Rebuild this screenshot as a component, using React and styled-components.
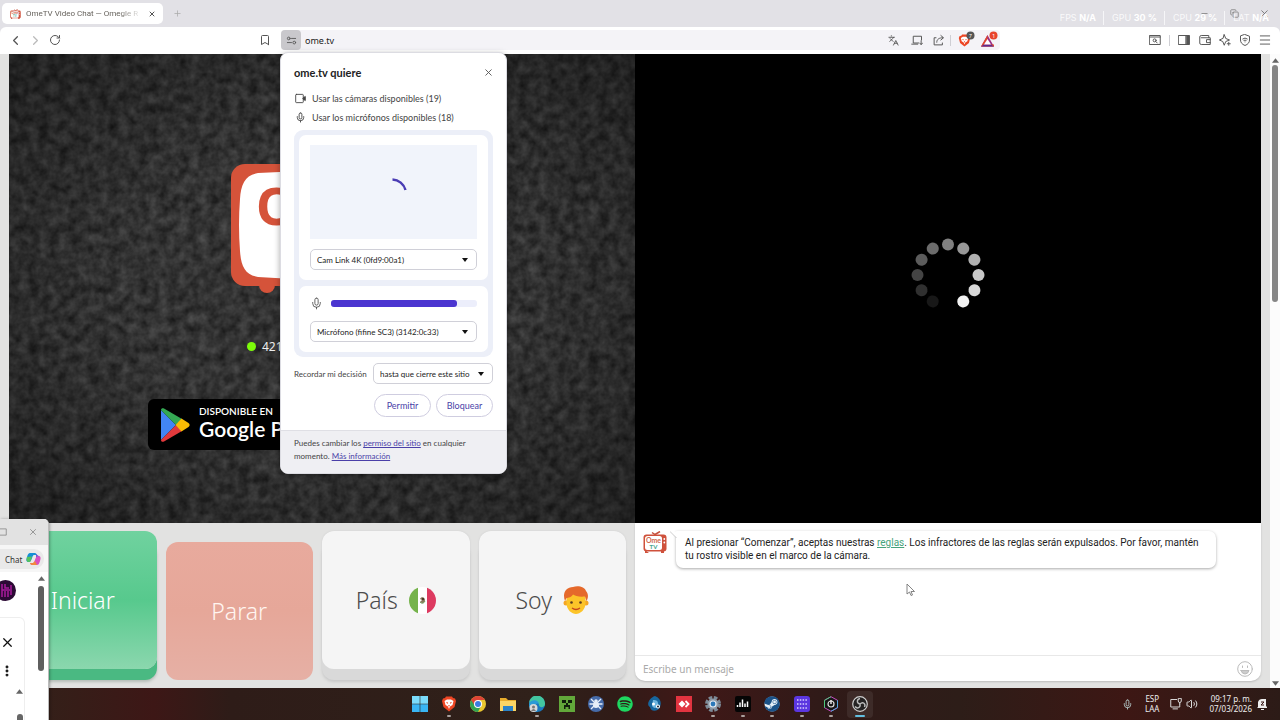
import React from 'react'
import styled, { createGlobalStyle, css } from 'styled-components'
import {
    ChevronLeft, ChevronRight, RotateCw, Bookmark, X, Plus, Languages, Menu,
    Mic, Volume2, Minus, Copy, EllipsisVertical,
} from 'lucide-react'
import { FaSpotify, FaSteam } from 'react-icons/fa'


const GlobalStyle = createGlobalStyle`
* { box-sizing: border-box; }
body { margin: 0; font-family: "Noto Sans", "Open Sans", sans-serif; font-size: 9px; color: #333; }
button, input, select { font: inherit; color: inherit; margin: 0; padding: 0; border: 0; background: none; }
svg { display: block; flex: none; }
`

const Desktop = styled.div`
position: relative;
display: flex;
flex-direction: column;
min-height: 100vh;
overflow: hidden;
background: #e2e1e6;
`


/* ---------- browser frame ---------- */

const TabStrip = styled.div`
display: flex;
align-items: center;
height: 27px;
padding: 0 8px 0 2px;
color: #555;
`

const Tab = styled.div`
display: flex;
align-items: center;
gap: 5px;
width: 161px;
height: 21px;
padding: 0 6px 0 8px;
border-radius: 5px;
background: #fff;
`

const TabTitle = styled.span`
flex: 1;
white-space: nowrap;
font-family: Roboto, sans-serif;
font-size: 8px;
color: #66625c;
mask-image: linear-gradient(90deg, #000 80%, transparent);
`

const IconButton = styled.button`
display: grid;
place-items: center;
width: ${p => p.$w || 20}px;
height: 20px;
color: ${p => p.$color || '#555'};
`

const WindowButtons = styled.div`
display: flex;
gap: 10px;
margin-left: auto;
margin-right: -2px;
`

const Stats = styled.div`
position: absolute;
top: 11px;
right: 11px;
display: flex;
gap: 7px;
color: rgba(255, 255, 255, 0.85);
font-family: Inter, sans-serif;
font-size: 9px;
line-height: 14px;
`

const Stat = styled.span`
padding-left: 8px;
border-left: 1px solid ${p => p.$first ? 'transparent' : '#f6f6f8'};
white-space: pre;
b { color: #fff; }
`

const Toolbar = styled.div`
display: grid;
grid-template-columns: 256px 1fr 280px;
align-items: center;
height: 27px;
padding-bottom: 1px;
border-radius: 6px 6px 0 0;
background: #fff;
`

const ToolGroup = styled.div`
display: flex;
align-items: center;
justify-content: ${p => p.$end ? 'flex-end' : 'flex-start'};
padding: 0 5px;
`

const Address = styled.div`
position: relative;
display: flex;
align-items: center;
`

const AddressField = styled.div`
display: flex;
flex: 1;
align-items: center;
height: 20px;
margin-left: 8px;
padding-right: 1px;
border-radius: 4px;
background: #f4f3f7;
`

const SiteButton = styled(IconButton)`
border-radius: 4px;
background: #c9c8cc;
`

const UrlInput = styled.input`
flex: 1;
min-width: 0;
padding-left: 4px;
font-size: 9px;
color: #222;
outline: none;
`

const Divider = styled.i`
width: 1px;
height: 11px;
margin: 0 3px 0 0;
background: #cfcfd4;
`


/* ---------- permission dialog ---------- */

const Dialog = styled.div`
position: absolute;
z-index: 3;
top: 22px;
left: 24px;
width: 227px;
overflow: hidden;
border: 1px solid #dcdce2;
border-radius: 8px;
background: #fff;
box-shadow: 0 2px 6px rgba(0, 0, 0, 0.35);
font-family: Lato, "Noto Sans", sans-serif;
font-size: 9px;
color: #444;
`

const DialogBody = styled.div`
padding: 9px 13px 13px;
`

const DialogHead = styled.div`
display: flex;
align-items: center;
justify-content: space-between;
height: 20px;
margin-bottom: 7px;
margin-right: -5px;
h2 { margin: 0; font-size: 11px; color: #222; }
`

const Ask = styled.div`
display: flex;
align-items: center;
gap: 6px;
height: 19px;
padding-left: 1px;
`

const Devices = styled.div`
display: grid;
gap: 6px;
margin-top: 3px;
padding: 5px;
border-radius: 9px;
background: #eceff8;
`

const Device = styled.div`
padding: 10px 11px;
border-radius: 7px;
background: #fff;
`

const Preview = styled.div`
display: grid;
place-items: center;
height: 94px;
margin-bottom: 10px;
background: #f1f4fb;
`

const Level = styled.div`
display: flex;
align-items: center;
gap: 8px;
height: 15px;
margin-bottom: 10px;
`

const LevelTrack = styled.div`
flex: 1;
height: 7px;
border-radius: 3px;
background: #eceefb;
`

const LevelFill = styled.div`
height: 7px;
border-radius: 3px;
background: #4b35d0;
`

const SelectBox = styled.label`
display: grid;
align-items: center;
flex: 1;
svg, select { grid-area: 1 / 1; }
svg { justify-self: end; margin-right: 9px; pointer-events: none; }
`

const Select = styled.select`
width: 100%;
height: 21px;
padding-left: 6px;
appearance: none;
border: 1px solid #d0d0d8;
border-radius: 5px;
background: #fff;
font-size: 8px;
color: #222;
`

const Remember = styled.div`
display: flex;
align-items: center;
gap: 5px;
margin-top: 6px;
font-size: 8px;
> span { width: 74px; white-space: nowrap; }
`

const Actions = styled.div`
display: flex;
justify-content: flex-end;
gap: 5px;
margin-top: 10px;
`

const PillButton = styled.button`
width: 57px;
height: 23px;
border: 1px solid #cfcde0;
border-radius: 12px;
color: #4a3fa8;
`

const DialogFoot = styled.p`
margin: 0;
padding: 6px 13px 10px;
border-top: 1px solid #dfdfe5;
background: #efeff3;
font-size: 8px;
line-height: 13px;
a { color: #4a3fa8; }
`


/* ---------- ome.tv page ---------- */

const Page = styled.main`
display: flex;
flex: 1;
background: #e2e2e1;
`

const Stage = styled.div`
display: grid;
flex: 1;
grid-template-columns: 1fr 1fr;
grid-template-rows: 1fr 165px;
margin: 0 9px;
`

const Video = styled.section`
position: relative;
display: flex;
flex-direction: column;
align-items: center;
min-height: 469px;
background: #000;
${p => p.$loading && css`
justify-content: center;
padding-bottom: 27px;
`}
`

const Noise = styled.svg`
position: absolute;
inset: 0;
width: 100%;
height: 100%;
`

const Intro = styled.div`
position: relative;
display: flex;
flex-direction: column;
align-items: center;
padding-top: 110px;
`

const Online = styled.div`
display: flex;
align-items: center;
gap: 6px;
width: 150px;
height: 20px;
margin-top: 42px;
font-size: 12px;
color: #eee;
&::before {
    content: "";
    width: 9px;
    height: 9px;
    border-radius: 50%;
    background: #7dfc0a;
}
`

const Stores = styled.div`
width: 348px;
margin-top: 43px;
`

const StoreLink = styled.a`
display: flex;
align-items: center;
gap: 9px;
width: 169px;
height: 51px;
padding-left: 12px;
border-radius: 6px;
background: #000;
color: #fff;
text-decoration: none;
white-space: nowrap;
font-family: Lato, sans-serif;
small { display: block; font-size: 10px; line-height: 13px; font-weight: 600; }
strong { display: block; padding-bottom: 4px; font-size: 21px; line-height: 22px; font-weight: 600; }
`

const Keys = styled.section`
display: grid;
grid-template-columns: repeat(4, 1fr);
gap: 9px;
padding: 8px 9px 8px 0;
`

const tones = {
    start: css`
    color: #fff;
    background: linear-gradient(#70d29f, #57c98d 50%, #8bd7ae);
    box-shadow: 0 11px 0 #4ab982, 0 13px 3px #b5bdb8;
    `,
    stop: css`
    color: #fff5f0;
    background: linear-gradient(#e8aa9d, #e6a799 50%, #e6b0a5);
    `,
    plain: css`
    color: #4c4c4c;
    background: #f5f5f5;
    box-shadow: 0 11px 0 #d9d9d9, 0 13px 3px #c9c9c9, 0 0 2px #ccc;
    `,
}

const Key = styled.button`
display: flex;
align-items: center;
justify-content: center;
gap: 11px;
height: 138px;
margin-top: ${p => p.$tone === 'stop' ? 11 : 0}px;
border-radius: 12px;
font-family: "Noto Sans", sans-serif;
font-size: 23px;
font-weight: 300;
${p => tones[p.$tone]}
`

const Chat = styled.section`
display: flex;
flex-direction: column;
margin-bottom: 7px;
border-radius: 0 0 10px 10px;
background: #fff;
box-shadow: 0 1px 2px #bbb;
`

const Messages = styled.div`
display: flex;
flex: 1;
align-items: flex-start;
gap: 9px;
padding: 8px 45px 0 8px;
`

const Bubble = styled.p`
position: relative;
flex: 1;
margin: 0;
padding: 5px 9px 6px;
border-radius: 1px 7px 7px 7px;
background: #fff;
box-shadow: 0 1px 3px #aaa;
font-family: Roboto, sans-serif;
font-size: 10px;
line-height: 13px;
color: #222;
a { color: #46a37c; }
svg { position: absolute; top: 0; left: -6px; }
`

const Compose = styled.label`
display: flex;
align-items: center;
height: 26px;
padding: 0 8px;
border-top: 1px solid #e8e8e8;
input { flex: 1; font-size: 10px; outline: none; }
input::placeholder { color: #aaa; }
`

const Scrollbar = styled.div`
display: flex;
flex-direction: column;
align-items: center;
gap: ${p => p.$gap || 2}px;
width: 10px;
padding: 4px 0 2px;
background: ${p => p.$bg || '#fcfcfc'};
svg:last-child:not(:first-child) { margin-top: auto; }
`

const Thumb = styled.i`
width: 6px;
height: ${p => p.$h}px;
border-radius: 3px;
background: ${p => p.$color || '#858585'};
`


/* ---------- assistant window ---------- */

const SideWindow = styled.aside`
position: absolute;
z-index: 4;
left: 0;
bottom: 0;
width: 49px;
height: 201px;
overflow: hidden;
border-right: 1px solid #bbb;
border-radius: 0 5px 0 0;
background: #fff;
box-shadow: 1px 0 3px rgba(0, 0, 0, 0.3);
`

const SideTitle = styled.div`
display: flex;
align-items: center;
justify-content: space-between;
height: 26px;
padding-right: 10px;
background: #e2e2e2;
color: #888;
`

const SideTools = styled.div`
height: 27px;
padding-top: 4px;
background: #f6f6f6;
`

const ChatPill = styled.button`
display: flex;
align-items: center;
gap: 4px;
width: 44px;
height: 20px;
padding-left: 5px;
border-radius: 0 10px 10px 0;
background: #e9e9e9;
font-size: 8px;
color: #333;
`

const SideBody = styled.div`
display: flex;
justify-content: space-between;
height: 148px;
padding-right: 2px;
`

const SideContent = styled.div`
width: 25px;
padding-top: 8px;
`

const SideCard = styled.div`
display: flex;
flex-direction: column;
align-items: flex-start;
gap: 14px;
height: 110px;
margin-top: 16px;
padding-top: 17px;
border: 1px solid #eee;
border-left: 0;
border-radius: 0 6px 0 0;
color: #111;
`

const InnerScroll = styled.div`
display: grid;
justify-items: center;
gap: 20px;
align-self: flex-end;
width: 9px;
margin-top: -3px;
`


/* ---------- taskbar ---------- */

const Taskbar = styled.footer`
display: grid;
grid-template-columns: 1fr 470px 1fr;
align-items: center;
height: 32px;
background: linear-gradient(90deg, #30231a, #3d1716 12%, #2e1c18 18%, #30211a 42%, #301b17 48%, #401817 54%, #301a18 64%, #2d1d18 75%, #3d1714 88%, #2c1b17);
color: #eee;
`

const Apps = styled.nav`
display: grid;
grid-column: 2;
grid-template-columns: repeat(16, 1fr);
justify-items: center;
`

const AppButton = styled.button`
display: flex;
flex-direction: column;
align-items: center;
gap: 3px;
width: 26px;
height: 27px;
padding-top: 5px;
border-radius: 4px;
background: ${p => p.$active ? 'rgba(255, 255, 255, 0.07)' : 'none'};
&::after {
    content: "";
    width: ${p => p.$active ? 10 : 4}px;
    height: 2px;
    border-radius: 1px;
    background: ${p => p.$active ? '#62bfe0' : p.$open ? '#aaa19e' : 'transparent'};
}
`

const Tray = styled.div`
display: flex;
align-items: center;
justify-content: flex-end;
padding-right: 12px;
font-size: 8px;
line-height: 10px;
time { margin: 0 5px 0 10px; text-align: right; white-space: nowrap; }
`

const Language = styled.span`
margin: 0 8px;
text-align: center;
`

const Cursor = styled.svg`
position: absolute;
z-index: 5;
left: 906px;
top: 583px;
`


const Icon = ({ size = 14, box = 16, children, ...rest }) => (
    <svg width={size} height={size} viewBox={`0 0 ${box} ${box}`} fill="none" stroke="currentColor"
        strokeWidth="1.3" strokeLinecap="round" strokeLinejoin="round" aria-hidden="true" {...rest}>
        {children}
    </svg>
)

const Caret = ({ up, width = 6 }) => (
    <svg width={width} height={width === 6 ? 4 : 5} viewBox="0 0 6 4" fill={width === 6 ? '#111' : '#666'} aria-hidden="true">
        <path d={up ? 'M0 4L3 0L6 4Z' : 'M0 0H6L3 4Z'} />
    </svg>
)

const MiniTv = ({ width, height }) => (
    <svg width={width} height={height} viewBox="0 0 24 22" aria-hidden="true">
        <path d="M9 1.500L12 3.500L17 0.500" fill="none" stroke="#c4503b" strokeWidth="1.500" />
        <rect x="0.500" y="3.500" width="23" height="17" rx="3" fill="#cf513c" />
        <path d="M2 19V22H6ZM18 20V22H21V19Z" fill="#cf513c" />
        <rect x="2" y="5" width="17" height="14" rx="2.500" fill="#fff" />
        <circle cx="21.300" cy="8" r="0.900" fill="#fff" />
        <circle cx="21.300" cy="11.500" r="0.900" fill="#fff" />
        <text x="10.500" y="11.500" textAnchor="middle" fontFamily="Lato" fontSize="7" fontWeight="700" fill="#cf6a50">Ome</text>
        <text x="10.500" y="17.500" textAnchor="middle" fontFamily="Lato" fontSize="6" fontWeight="700" fill="#46a58c">TV</text>
    </svg>
)

const BigLogo = () => (
    <svg width="182" height="130" viewBox="0 0 182 130" aria-label="OmeTV">
        <rect width="182" height="122" rx="14" fill="#d5533a" />
        <circle cx="36" cy="121" r="8" fill="#d5533a" />
        <circle cx="146" cy="121" r="8" fill="#d5533a" />
        <path d="M27 9Q70 6 118 9C132 11 136 20 137 35Q139 61 137 87C135 103 131 112 118 113Q70 116 27 113C14 111 10 102 9 87Q7 61 9 35C10 20 14 11 27 9Z" fill="#fff" />
        <text x="25" y="61" fontFamily="Noto Sans" fontSize="52" fontWeight="700" fill="#d5533a">Ome</text>
    </svg>
)

const PlayLogo = () => (
    <svg width="30" height="34" viewBox="0 0 30 34" aria-hidden="true">
        <path d="M1 2V32L16 17Z" fill="#4285f4" />
        <path d="M1 2C1 0 3 0 4 0.500L22 11L16 17Z" fill="#34a853" />
        <path d="M1 32C1 34 3 34 4 33.500L22 23L16 17Z" fill="#e1393c" />
        <path d="M21.500 10.500L28.500 15C30 16 30 18 28.500 19L21.500 23.500L15.500 17Z" fill="#fbbc04" />
    </svg>
)

const dots = ['#808080', '#989898', '#b0b0b0', '#c8c8c8', '#d8d8d8', '#f2f2f2', null, '#181818', '#303030', '#444', '#5c5c5c', '#6c6c6c']

const Spinner = () => (
    <svg width="74" height="74" viewBox="-37 -37 74 74" role="img" aria-label="Cargando">
        {dots.map((fill, i) => fill && (
            <circle key={i} cy="-30.500" r="6" fill={fill} transform={`rotate(${i * 30})`} />
        ))}
    </svg>
)

const Flag = () => (
    <svg width="27" height="27" viewBox="0 0 27 27" aria-hidden="true">
        <clipPath id="round"><circle cx="13.500" cy="13.500" r="13.500" /></clipPath>
        <g clipPath="url(#round)">
            <path d="M0 0H9V27H0Z" fill="#75b34b" />
            <path d="M9 0H18V27H9Z" fill="#fff" />
            <path d="M18 0H27V27H18Z" fill="#dd3a60" />
        </g>
        <path d="M11 12C12 9 16 10 16 13S13 17 11 15L13 13Z" fill="#8b7a5c" />
        <path d="M11 15Q14 18 16 14" fill="none" stroke="#6e9b5a" />
        <circle cx="14" cy="12" r="1.200" fill="#4a3b2c" />
    </svg>
)

const Boy = () => (
    <svg width="26" height="28" viewBox="0 0 26 28" aria-hidden="true">
        <circle cx="3" cy="17" r="2.500" fill="#f5a623" />
        <circle cx="23" cy="17" r="2.500" fill="#f5a623" />
        <path d="M3.500 12C3 4 23 4 22.500 12V17C22.500 24 17 28 13 28S3.500 24 3.500 17Z" fill="#fcc429" />
        <path d="M2 15C-1 7 3 1 10 1C15 -1 22 1 23 5C26 8 25 13 23.500 15L22 10.500C16 11 12 10 10 8.500C9 11 5 12 3.500 12Z" fill="#e5692b" />
        <circle cx="8.500" cy="16.500" r="1.300" fill="#5b3b22" />
        <circle cx="17.500" cy="16.500" r="1.300" fill="#5b3b22" />
        <path d="M9 22Q13 25 17 22" fill="none" stroke="#c6451e" strokeWidth="1.300" />
    </svg>
)

const Lion = ({ size = 14 }) => (
    <svg width={size} height={size} viewBox="0 0 16 16" aria-hidden="true">
        <path d="M5 0.500H11L12 2L14 2.500L15 5L13.500 11L8 15.500L2.500 11L1 5L2 2.500L4 2Z" fill="#ed4624" />
        <path d="M3.500 5L6 3.500H10L12.500 5L11.500 9L9 10.500L8 13L7 10.500L4.500 9Z" fill="#fff" />
        <path d="M5 6L7 6.500L6.500 8ZM11 6L9 6.500L9.500 8ZM7.200 9H8.800L8 11Z" fill="#ed4624" />
    </svg>
)

const Badged = ({ children, fill }) => (
    <svg width="18" height="18" viewBox="0 0 18 18" aria-hidden="true">
        <g transform="translate(1 3)">{children}</g>
        <circle cx="13.500" cy="4.500" r="4" fill={fill} />
        <text x="13.500" y="6.500" textAnchor="middle" fontFamily="Inter" fontSize="5" fill="#fff">{fill === '#555' ? '7' : '1'}</text>
    </svg>
)

const Copilot = () => (
    <svg width="15" height="14" viewBox="0 0 15 14" aria-hidden="true">
        <path d="M4 1H9C10 1 10.500 2 11 3H8C6 3 6 10 3 10C0 10 0 8 1 5C2 2 2.500 1 4 1Z" fill="#168fd5" />
        <path d="M1 5L6 4.500L4.500 9.500Q1 11 0.500 8Z" fill="#53c35f" />
        <path d="M11 13H6C5 13 4.500 12 4 11H7C9 11 9 4 12 4C15 4 15 6 14 9C13 12 12.500 13 11 13Z" fill="#d94fc0" />
        <path d="M11 13H6C5 13 4.500 12 4 11H7L9 9Z" fill="#f28a3c" />
        <path d="M10 2L14 5Q12 3.500 10 5.500Z" fill="#7550d8" />
    </svg>
)

const appIcons = {
    Inicio: <><path d="M0 0H7.700V7.700H0ZM8.300 0H16V7.700H8.300Z" fill="#7bdcfb" /><path d="M0 8.300H7.700V16H0ZM8.300 8.300H16V16H8.300Z" fill="#39b5f3" /></>,
    Brave: <Lion size={16} />,
    Chrome: <>
        <circle cx="8" cy="8" r="8" fill="#e9c62f" />
        <path d="M8 8L1.100 4A8 8 0 0 0 8 16L11 10Z" fill="#31a352" />
        <path d="M8 4H14.900A8 8 0 0 0 1.100 4L5 10Z" fill="#dd4436" />
        <circle cx="8" cy="8" r="4" fill="#fff" /><circle cx="8" cy="8" r="3" fill="#3c7de0" />
    </>,
    Explorador: <><path d="M0 2H6L8 4H16V14H0Z" fill="#e8ac2c" /><path d="M0 5H16V15H0Z" fill="#fbd565" /><path d="M3 10H13V15H3Z" fill="#2b83c8" /></>,
    Edge: <>
        <circle cx="8" cy="8" r="8" fill="#1a78be" />
        <path d="M0 7A8 8 0 0 1 16 8C16 12 10 12 10 9C10 6 4 4 0 7Z" fill="#43c6a0" />
        <path d="M0 8C2 2 10 4 10 8C6 6 5 12 9 15C4 17 0 13 0 8Z" fill="#2a9bd6" />
        <circle cx="4.500" cy="12" r="4" fill="#d9d9d9" /><circle cx="4.500" cy="11" r="1.500" fill="#777" /><path d="M2 15Q4.500 11 7 15Z" fill="#777" />
    </>,
    Minecraft: <><path d="M0 0H16V16H0Z" fill="#62a83a" /><path d="M3 4H7V7H3ZM9 4H13V7H9ZM7 7H9V9H11V13H9.500V11H6.500V13H5V9H7Z" fill="#10200b" /></>,
    Araña: <>
        <circle cx="8" cy="8" r="8" fill="#466ba9" />
        <path d="M8 8L3 3M8 8L13 3M8 8H1.500M8 8H14.500M8 8L3 13M8 8L13 13" stroke="#e8eef8" strokeWidth="1.300" />
        <circle cx="8" cy="9" r="3" fill="#e8eef8" /><circle cx="8" cy="5" r="1.800" fill="#e8eef8" />
    </>,
    Spotify: <FaSpotify size={16} color="#1ed760" />,
    Agua: <><path d="M8 0C13 2 15 6 13 11C12 15 4 17 3 11C-1 9 2 2 8 0Z" fill="#17669e" /><path d="M6 4Q12 3 11 10Q8 14 5 10Z" fill="#6fb6df" /><circle cx="6.500" cy="8" r="1.500" fill="#fff" /><circle cx="11" cy="10.500" r="2" fill="#fff" /><circle cx="11" cy="10.500" r="1" fill="#123" /></>,
    AnyDesk: <><path d="M0 0H16V16H0Z" fill="#e23440" /><path d="M2.500 8L6 4.500L9.500 8L6 11.500Z" fill="#fff" /><path d="M9.500 5L12.500 8L9.500 11" fill="none" stroke="#fff" strokeWidth="1.800" /></>,
    Ajustes: <>
        <circle cx="8" cy="8" r="6.400" fill="none" stroke="#7c8a97" strokeWidth="3.200" strokeDasharray="3.500 1.530" />
        <circle cx="8" cy="8" r="5.500" fill="#8e9ba8" /><circle cx="8" cy="8" r="3.600" fill="#e4ebf1" /><circle cx="8" cy="8" r="2.400" fill="#2b79b9" />
    </>,
    Audio: <><rect width="16" height="16" rx="2" fill="#050505" /><path d="M2.500 9V11M5 6.500V11M7.500 3.500V11M10 7.500V11M12.500 5.500V11" stroke="#fff" strokeWidth="1.500" /></>,
    Steam: <><circle cx="8" cy="8" r="7.500" fill="#e6f0f8" /><FaSteam size={16} color="#1b5288" /></>,
    Cuadrícula: <><rect width="16" height="16" rx="3" fill="#5b36e0" /><path d="M3 4H13M3 8H13M3 12H13" stroke="#d9d0ff" strokeWidth="1.500" strokeDasharray="1.500 1.300" /></>,
    Energía: <>
        <path d="M8 0.700L14.500 4.300V11.700L8 15.300L1.500 11.700V4.300Z" fill="#171717" stroke="#c74ec2" />
        <path d="M1.500 11.700V4.300L8 0.700" fill="none" stroke="#4fc77c" /><path d="M14.500 4.300V11.700L8 15.300" fill="none" stroke="#52a8e0" />
        <circle cx="8" cy="8" r="3" fill="none" stroke="#ddd" strokeWidth="1.200" /><path d="M8 4V8" stroke="#fff" strokeWidth="1.300" />
    </>,
    OBS: <>
        <circle cx="8" cy="8" r="7.300" fill="#252323" stroke="#cfcfcf" strokeWidth="1.200" />
        <path d="M8 8C4 7 5 3 8 2.500M8 8C11 5 14 8 12.500 11M8 8C9 12 5 13 3 10.500" fill="none" stroke="#bdbdbd" strokeWidth="1.400" />
    </>,
}

const openApps = ['Brave', 'Edge', 'Ajustes', 'Audio', 'Steam', 'Cuadrícula', 'Energía']

const keys = [
    { label: 'Iniciar', tone: 'start' },
    { label: 'Parar', tone: 'stop' },
    { label: 'País', tone: 'plain', icon: <Flag /> },
    { label: 'Soy', tone: 'plain', icon: <Boy /> },
]

const stats = [['FPS', 'N/A'], ['GPU', '30 %'], ['CPU', '29 %'], ['LAT', 'N/A']]


const Picker = ({ label, value }) => (
    <SelectBox>
        <Select aria-label={label} defaultValue={value}>
            <option>{value}</option>
        </Select>
        <Caret />
    </SelectBox>
)

const PermissionDialog = () => (
    <Dialog role="dialog" aria-label="ome.tv quiere">
        <DialogBody>
            <DialogHead>
                <h2>ome.tv quiere</h2>
                <IconButton aria-label="Cerrar"><X size={11} /></IconButton>
            </DialogHead>
            <Ask>
                <Icon size={11}><rect x="1" y="2" width="11" height="12" rx="1" /><path d="M12 7L15 5V11L12 9Z" fill="currentColor" /></Icon>
                Usar las cámaras disponibles (19)
            </Ask>
            <Ask><Mic size={11} />Usar los micrófonos disponibles (18)</Ask>
            <Devices>
                <Device>
                    <Preview>
                        <svg width="32" height="32" viewBox="0 0 32 32" aria-hidden="true">
                            <path d="M14.500 3.500A14 14 0 0 1 27.500 14" fill="none" stroke="#4a3cb4" strokeWidth="2.500" />
                        </svg>
                    </Preview>
                    <Picker label="Cámara" value="Cam Link 4K (0fd9:00a1)" />
                </Device>
                <Device>
                    <Level>
                        <Mic size={13} strokeWidth={1.5} />
                        <LevelTrack><LevelFill style={{ width: '86%' }} /></LevelTrack>
                    </Level>
                    <Picker label="Micrófono" value="Micrófono (fifine SC3) (3142:0c33)" />
                </Device>
            </Devices>
            <Remember>
                <span>Recordar mi decisión</span>
                <Picker label="Recordar mi decisión" value="hasta que cierre este sitio" />
            </Remember>
            <Actions>
                <PillButton>Permitir</PillButton>
                <PillButton>Bloquear</PillButton>
            </Actions>
        </DialogBody>
        <DialogFoot>
            Puedes cambiar los <a href="#permisos">permiso del sitio</a> en cualquier momento. <a href="#info">Más información</a>
        </DialogFoot>
    </Dialog>
)

const Browser = () => (
    <header>
        <TabStrip>
            <Tab>
                <MiniTv width={11} height={10} />
                <TabTitle>OmeTV Video Chat — Omegle R</TabTitle>
                <IconButton $w={10} aria-label="Cerrar pestaña"><X size={8} strokeWidth={3} /></IconButton>
            </Tab>
            <IconButton $w={28} $color="#aaa" aria-label="Nueva pestaña"><Plus size={9} /></IconButton>
            <WindowButtons>
                <IconButton $color="#777" aria-label="Minimizar"><Minus size={9} /></IconButton>
                <IconButton $color="#777" aria-label="Restaurar"><Copy size={9} style={{ transform: 'scaleX(-1) rotate(90deg)' }} /></IconButton>
                <IconButton $color="#777" aria-label="Cerrar"><X size={11} /></IconButton>
            </WindowButtons>
        </TabStrip>
        <Stats>
            {stats.map(([name, value], i) => <Stat key={name} $first={i === 0}>{name} <b>{value}</b></Stat>)}
        </Stats>
        <Toolbar>
            <ToolGroup>
                <IconButton aria-label="Atrás"><ChevronLeft size={15} /></IconButton>
                <IconButton $color="#bbb" aria-label="Adelante"><ChevronRight size={15} /></IconButton>
                <IconButton aria-label="Recargar"><RotateCw size={12} /></IconButton>
            </ToolGroup>
            <Address>
                <IconButton $w={17} aria-label="Marcador"><Bookmark size={12} /></IconButton>
                <AddressField>
                    <SiteButton aria-label="Información del sitio">
                        <Icon size={11}><circle cx="4" cy="5" r="2" /><path d="M8 5H14M2 11H8" /><circle cx="12" cy="11" r="2" /></Icon>
                    </SiteButton>
                    <UrlInput aria-label="Dirección" defaultValue="ome.tv" />
                    <IconButton $w={23} aria-label="Traducir"><Languages size={11} /></IconButton>
                    <IconButton $w={23} aria-label="Instalar"><Icon size={12}><path d="M10 12H3V3H14V8M1 13.500H9M13.500 9V14M11.500 12L13.500 14L15.500 12" /></Icon></IconButton>
                    <IconButton $w={22} aria-label="Compartir"><Icon size={12}><path d="M4 5H1.500V14.500H12.500V12M5 11C5 7 8 5 13 5M10.500 2L14 5L10.500 8" /></Icon></IconButton>
                    <Divider />
                    <IconButton $w={24} aria-label="Brave Shields"><Badged fill="#555"><Lion size={13} /></Badged></IconButton>
                    <IconButton $w={21} aria-label="Rewards">
                        <Badged fill="#e8432c">
                            <path d="M6.500 1L13 12.500H0Z" fill="#9b2f83" /><path d="M0 12.500L6.500 1V5L3 10.500H13V12.500Z" fill="#e2492c" /><path d="M0 12.500L3 10.500H10L13 12.500Z" fill="#5c2d91" /><path d="M6.500 5L10 10.500H3Z" fill="#fff" />
                        </Badged>
                    </IconButton>
                </AddressField>
                <PermissionDialog />
            </Address>
            <ToolGroup $end>
                <IconButton $w={28} aria-label="Buscar pestañas"><Icon size={12}><path d="M1 2H15V14H1ZM1 4H15" /><circle cx="7.500" cy="8.500" r="2" /><path d="M9 10L11 12" /></Icon></IconButton>
                <Divider />
                <IconButton $w={22} aria-label="Panel lateral"><Icon size={12}><path d="M1 2H15V14H1Z" /><path d="M11 2H15V14H11Z" fill="currentColor" /></Icon></IconButton>
                <IconButton aria-label="Cartera"><Icon size={12}><path d="M13 5V2H3Q1 2 1 4V12Q1 14 3 14H15V5H3M15 7.500H10V11.500H15" /></Icon></IconButton>
                <IconButton aria-label="Leo"><Icon size={12}><path d="M7 1L9 6L14 8L9 10L7 15L5 10L0.500 8L5 6ZM13 11V15M11 13H15" /></Icon></IconButton>
                <IconButton aria-label="VPN"><Icon size={12}><path d="M8 0.700L14 3V8Q14 13 8 15.300Q2 13 2 8V3ZM5 6.500Q8 4 11 6.500M6.500 8.500Q8 7.500 9.500 8.500M8 10.500V10.600" /></Icon></IconButton>
                <IconButton aria-label="Menú"><Menu size={14} strokeWidth={1.6} /></IconButton>
            </ToolGroup>
        </Toolbar>
    </header>
)

const Assistant = () => (
    <SideWindow>
        <SideTitle>
            <Icon size={10}><path d="M-4 3H10V13H-4Z" /></Icon>
            <X size={10} />
        </SideTitle>
        <SideTools><ChatPill>Chat <Copilot /></ChatPill></SideTools>
        <SideBody>
            <SideContent>
                <svg width="16" height="21" viewBox="0 0 16 21" aria-hidden="true">
                    <circle cx="5.500" cy="10.500" r="10.500" fill="#2c0a35" />
                    <path d="M2 4V17M5 4V8H9M5 11V17M8 11V17M11 5V15M2 10H10" stroke="#a81b9c" strokeWidth="1.500" fill="none" />
                </svg>
                <SideCard>
                    <X size={15} />
                    <EllipsisVertical size={14} strokeWidth={3} />
                    <InnerScroll><Caret up width={7} /><Thumb $h={12} $color="#666" /></InnerScroll>
                </SideCard>
            </SideContent>
            <Scrollbar $bg="#fff" $gap={5}>
                <Caret up width={7} />
                <Thumb $h={85} $color="#5f5f5f" />
            </Scrollbar>
        </SideBody>
    </SideWindow>
)

const OmePage = () => (
    <Page>
        <Stage>
            <Video>
                <Noise aria-hidden="true">
                    <filter id="static" x="0" y="0" width="100%" height="100%" colorInterpolationFilters="sRGB">
                        <feTurbulence type="fractalNoise" baseFrequency="0.1" numOctaves="3" seed="4" />
                        <feColorMatrix values="0.26 0 0 0 0.07  0.26 0 0 0 0.07  0.26 0 0 0 0.07  0 0 0 0 1" />
                    </filter>
                    <radialGradient id="vignette" r="0.750">
                        <stop offset="0.400" stopColor="#000" stopOpacity="0" />
                        <stop offset="1" stopColor="#000" stopOpacity="0.400" />
                    </radialGradient>
                    <rect width="100%" height="100%" filter="url(#static)" />
                    <rect width="100%" height="100%" fill="url(#vignette)" />
                </Noise>
                <Intro>
                    <BigLogo />
                    <Online>421</Online>
                    <Stores>
                        <StoreLink href="#play">
                            <PlayLogo />
                            <span><small>DISPONIBLE EN</small><strong>Google Play</strong></span>
                        </StoreLink>
                    </Stores>
                </Intro>
            </Video>
            <Video $loading><Spinner /></Video>
            <Keys>
                {keys.map(key => <Key key={key.label} $tone={key.tone}>{key.label}{key.icon}</Key>)}
            </Keys>
            <Chat>
                <Messages>
                    <MiniTv width={24} height={22} />
                    <Bubble>
                        <Icon size={7} box={7} strokeWidth="1" stroke="#ccc"><path d="M0 0.500H7V7Z" fill="#fff" stroke="none" /><path d="M0 0.500L6.500 7" /></Icon>
                        Al presionar “Comenzar”, aceptas nuestras <a href="#reglas">reglas</a>. Los infractores de las reglas serán expulsados. Por favor, mantén tu rostro visible en el marco de la cámara.
                    </Bubble>
                </Messages>
                <Compose>
                    <input placeholder="Escribe un mensaje" aria-label="Escribe un mensaje" />
                    <Icon size={16} color="#bbb" strokeWidth="1"><circle cx="8" cy="8" r="7.300" /><path d="M5.500 5V6.500M10.500 5V6.500" /><path d="M4 9.500H12Q11 13 8 13T4 9.500Z" fill="#ccc" /></Icon>
                </Compose>
            </Chat>
        </Stage>
        <Scrollbar>
            <Caret up width={7} />
            <Thumb $h={237} />
            <Caret width={7} />
        </Scrollbar>
    </Page>
)

const App = () => (
    <Desktop>
        <GlobalStyle />
        <Browser />
        <OmePage />
        <Taskbar>
            <Apps>
                {Object.entries(appIcons).map(([name, art]) => (
                    <AppButton key={name} aria-label={name} $open={openApps.includes(name)} $active={name === 'OBS'}>
                        <svg width="16" height="16" viewBox="0 0 16 16" aria-hidden="true">{art}</svg>
                    </AppButton>
                ))}
            </Apps>
            <Tray>
                <IconButton $color="#b5c9c8" aria-label="Micrófono"><Mic size={11} /></IconButton>
                <Language>ESP<br />LAA</Language>
                <IconButton $w={18} $color="#ddd" aria-label="Red"><Icon size={12}><path d="M9 2H1V12H13V8M4 14.500H10M11 1V4Q11 6 13 6T15 4V1ZM13 6V8" /></Icon></IconButton>
                <IconButton $w={14} $color="#ddd" aria-label="Volumen"><Volume2 size={12} /></IconButton>
                <time>09:17 p. m.<br />07/03/2026</time>
                <svg width="11" height="12" viewBox="0 0 11 12" fill="#eee" aria-label="Notificaciones"><path d="M1 9V4Q2 1 5 1H9V8L10 9V10H0ZM4 11H7V12H4Z" /><path d="M4 4H7L4 7H7" stroke="#3a1816" fill="none" /></svg>
            </Tray>
        </Taskbar>
        <Assistant />
        <Cursor width="9" height="14" viewBox="0 0 9 14" aria-hidden="true">
            <path d="M1 1V11L3.500 9L5 12.500L6.500 12L5 8.500H8.500Z" fill="#fff" stroke="#777" strokeWidth="0.900" />
        </Cursor>
    </Desktop>
)

export default App
